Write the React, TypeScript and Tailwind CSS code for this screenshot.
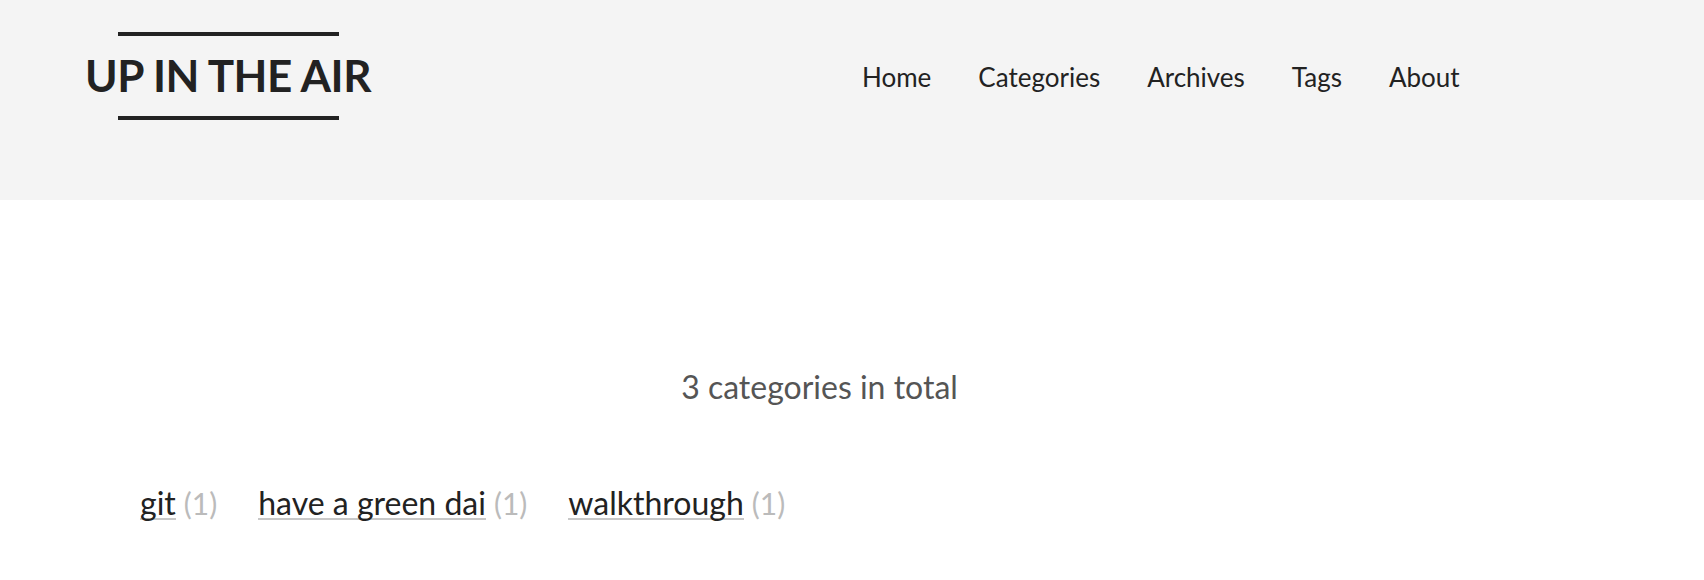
import React from 'react';

const navItems = ["Home", "Categories", "Archives", "Tags", "About"];

const categories = [
  { name: "git", count: 1 },
  { name: "have a green dai", count: 1 },
  { name: "walkthrough", count: 1 },
];

const Header = () => {
  return (
    <header className="h-[200px] w-full bg-[#f4f4f4] flex items-start pl-[84px]">
      <div className="w-[288px] flex flex-col items-center pt-[32px]">
        <span className="block w-[221px] h-[4px] bg-[#222]" />
        <a className="mt-[12px] text-[44px] leading-[54px] tracking-[-0.5px] font-bold text-[#222] whitespace-nowrap">
          UP IN THE AIR
        </a>
        <span className="block w-[221px] h-[4px] bg-[#222] mt-[14px]" />
      </div>
      <nav className="ml-[490px] mt-[62px] flex gap-[47px]">
        {navItems.map((item) => (
          <a key={item} className="text-[26px] leading-[31px] text-[#222] whitespace-nowrap">
            {item}
          </a>
        ))}
      </nav>
    </header>
  );
};

const App = () => {
  return (
    <div
      className="w-full min-h-[580px] bg-white"
      style={{ fontFamily: 'Lato, "Noto Sans", sans-serif' }}
    >
      <Header />
      <main className="pl-[140px] pr-[205px]">
        <h2 className="mt-[168px] text-center text-[32px] leading-[38px] font-normal text-[#555]">
          {categories.length} categories in total
        </h2>
        <ul className="mt-[75px] flex gap-[41px] items-baseline">
          {categories.map((cat) => (
            <li key={cat.name} className="flex items-baseline whitespace-nowrap">
              <a className="inline-block text-[32px] leading-[31px] text-[#222] border-b-2 border-[#c8c8c8]">
                {cat.name}
              </a>
              <span className="ml-[8px] text-[30px] text-[#bbb]">({cat.count})</span>
            </li>
          ))}
        </ul>
      </main>
    </div>
  );
};

export default App;
